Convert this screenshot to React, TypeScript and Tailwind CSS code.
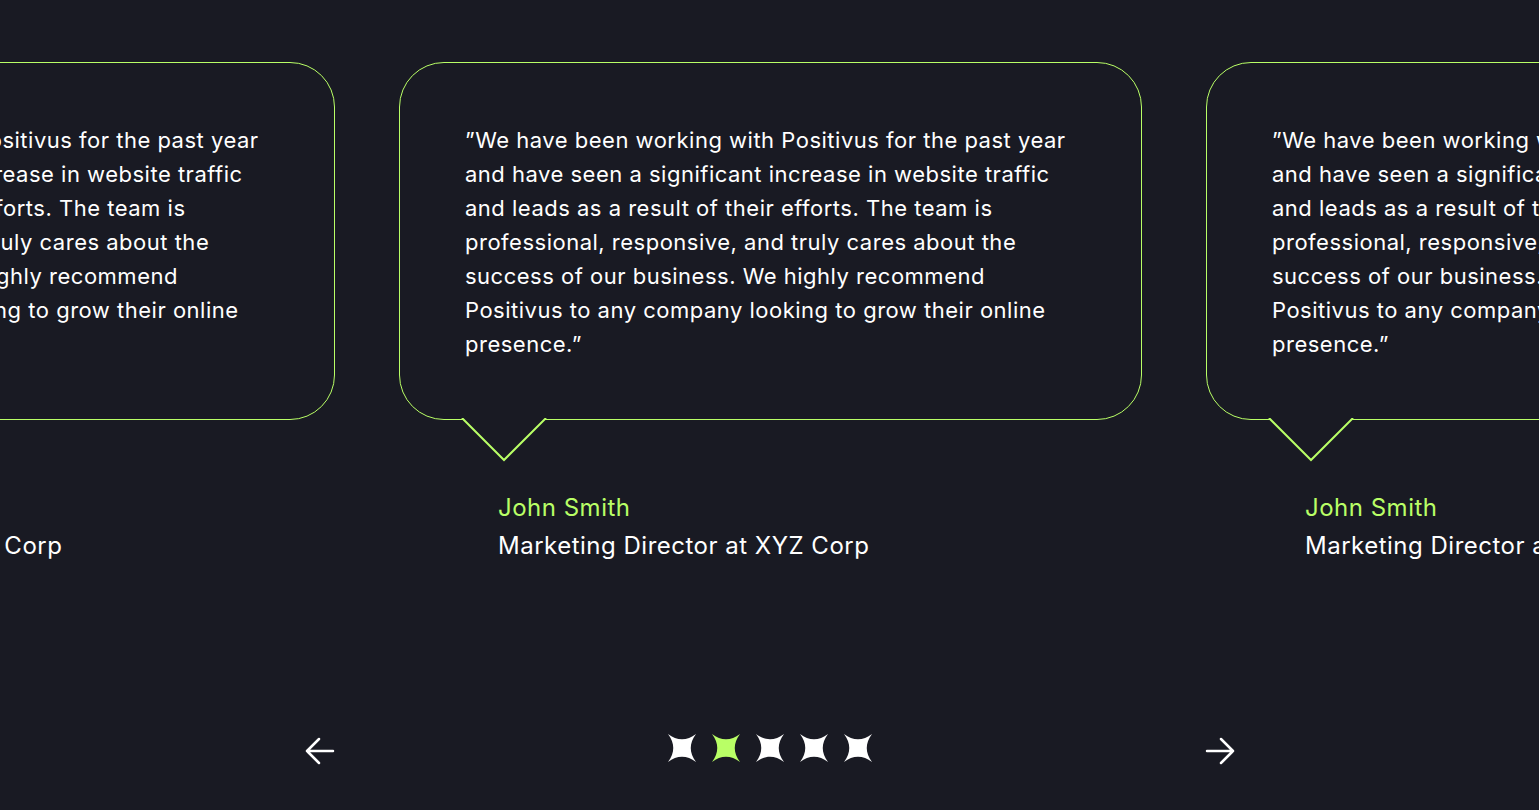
const lines = [
  '”We have been working with Positivus for the past year',
  'and have seen a significant increase in website traffic',
  'and leads as a result of their efforts. The team is',
  'professional, responsive, and truly cares about the',
  'success of our business. We highly recommend',
  'Positivus to any company looking to grow their online',
  'presence.”',
]

function Testimonial() {
  return (
    <div className="flex w-[743px] shrink-0 flex-col">
      <div className="relative h-[358px] rounded-[45px] border border-[#B9FF66] px-[65px] py-[60px]">
        <p className="text-[22px] leading-[34px] tracking-[0.5px] text-white">
          {lines.map((l) => (
            <span key={l} className="block whitespace-nowrap">
              {l}
            </span>
          ))}
        </p>
        <svg
          className="absolute left-[61px] top-full -mt-[1px]"
          width="86"
          height="45"
          viewBox="0 0 86 45"
          fill="none"
        >
          <polygon points="1,0 43,42 85,0" fill="#191A23" />
          <polyline points="1,0 43,42 85,0" stroke="#B9FF66" strokeWidth="2" />
        </svg>
      </div>
      <div className="mt-[69px] pl-[99px] text-[24px] leading-[38px] tracking-[0.5px]">
        <div className="text-[#B9FF66]">John Smith</div>
        <div className="text-white">Marketing Director at XYZ Corp</div>
      </div>
    </div>
  )
}

function Star({ active }: { active?: boolean }) {
  return (
    <svg width="30" height="30" viewBox="0 0 30 30">
      <path
        d="M1 1C10 8 20 8 29 1C22 10 22 20 29 29C20 22 10 22 1 29C8 20 8 10 1 1Z"
        fill={active ? '#B9FF66' : '#FFFFFF'}
      />
    </svg>
  )
}

function Arrow({ dir }: { dir: 'left' | 'right' }) {
  return (
    <svg
      width="30"
      height="30"
      viewBox="0 0 30 30"
      fill="none"
      stroke="white"
      strokeWidth="2.5"
      strokeLinecap="round"
      strokeLinejoin="round"
      className={dir === 'right' ? 'mt-[6px] rotate-180' : 'mt-[6px]'}
    >
      <path d="M28 15H2M14 3L2 15L14 27" />
    </svg>
  )
}

export default function App() {
  return (
    <div
      className="h-[810px] w-full overflow-hidden bg-[#191A23] pt-[62px]"
      style={{ fontFamily: 'Inter, "Noto Sans", sans-serif' }}
    >
      <div className="-ml-[408px] flex gap-[64px]">
        <Testimonial />
        <Testimonial />
        <Testimonial />
      </div>
      <div className="mx-auto mt-[165px] flex w-[930px] items-center justify-between">
        <Arrow dir="left" />
        <div className="flex gap-[14px]">
          <Star />
          <Star active />
          <Star />
          <Star />
          <Star />
        </div>
        <Arrow dir="right" />
      </div>
    </div>
  )
}
